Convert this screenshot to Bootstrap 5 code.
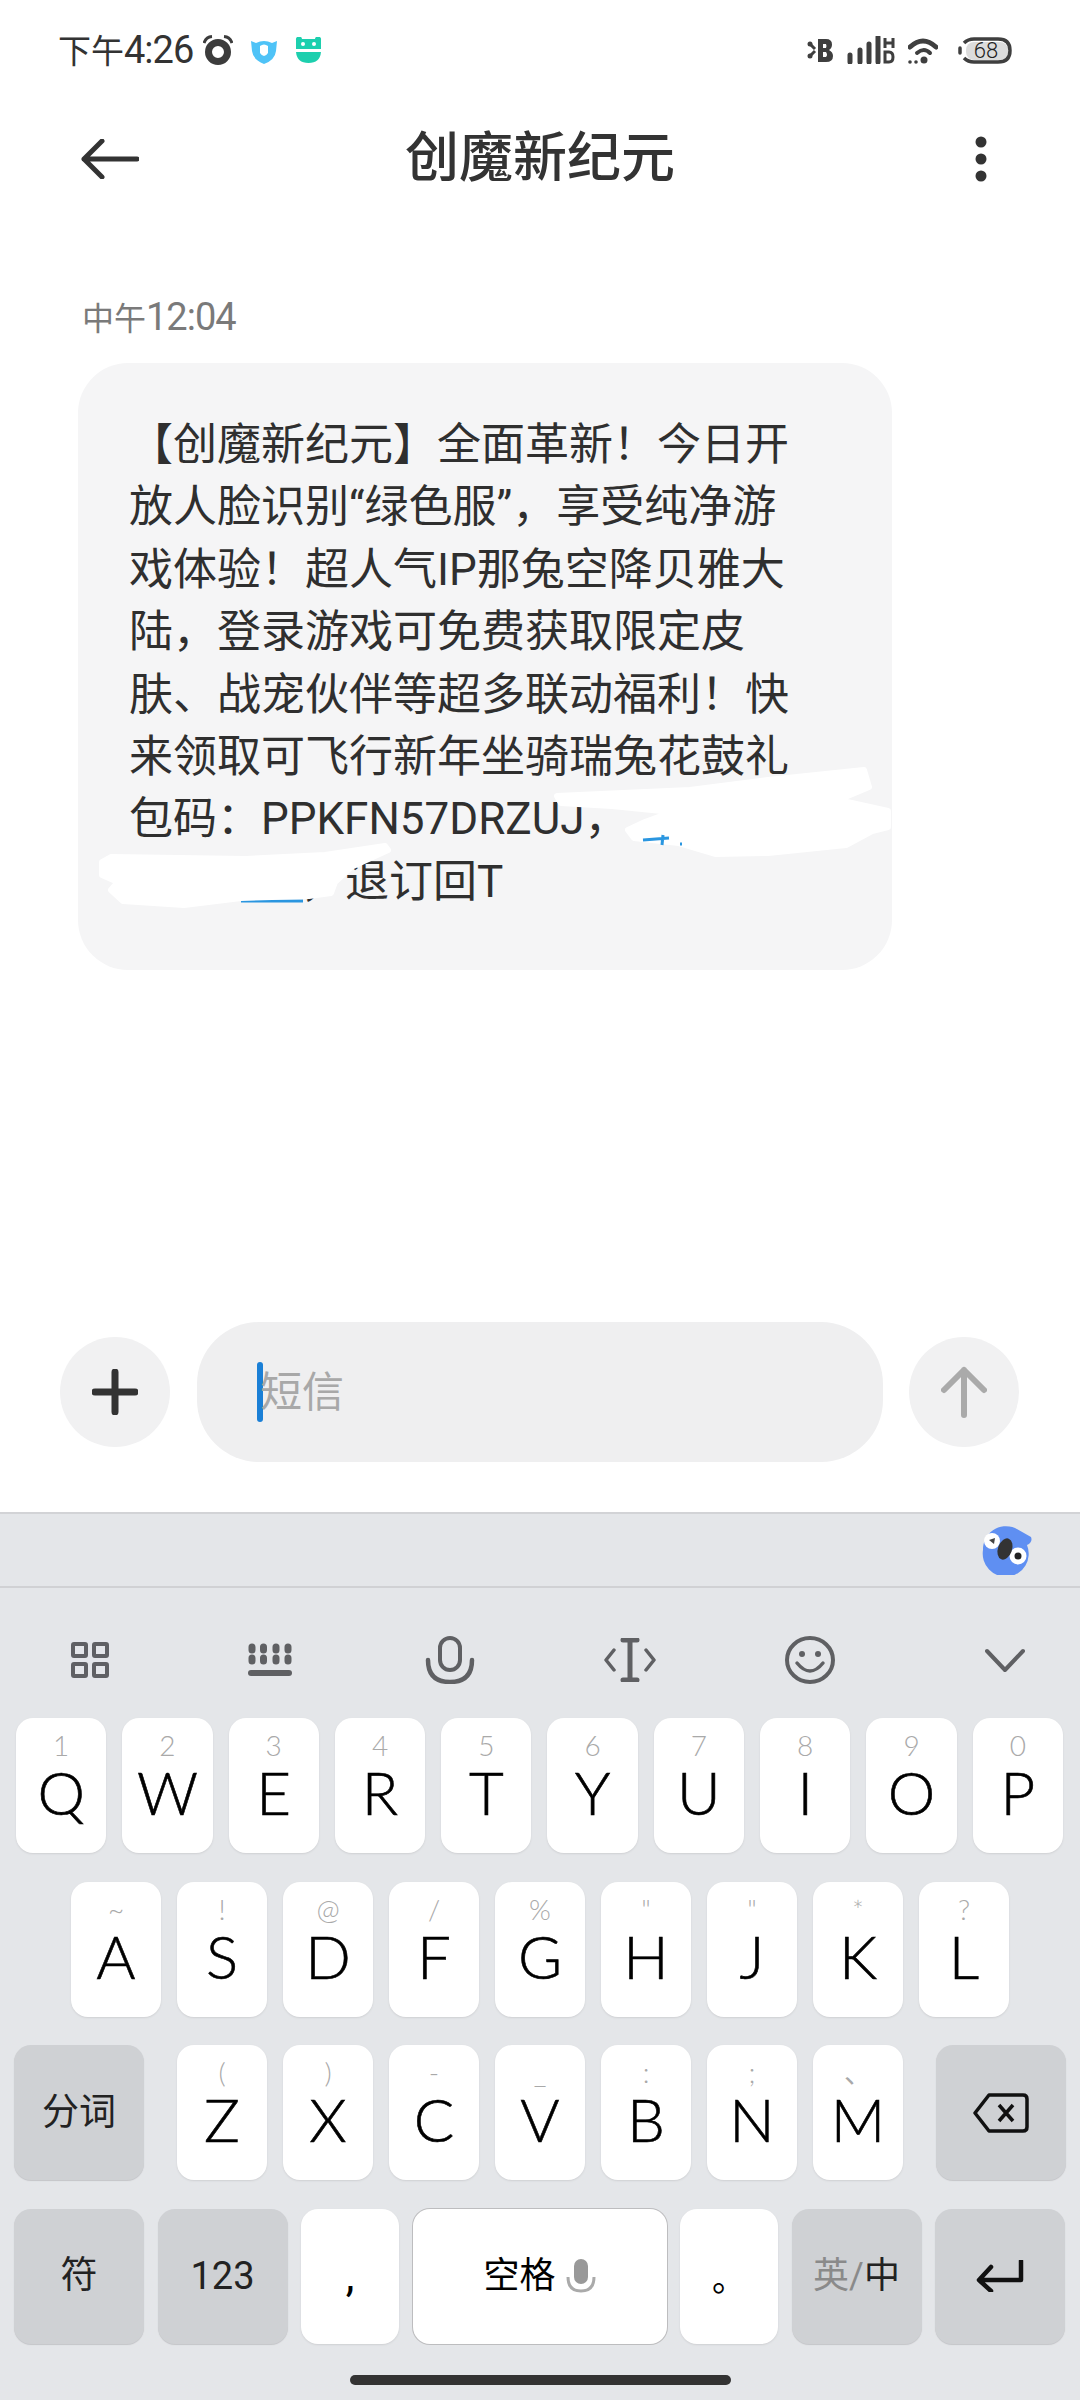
<!DOCTYPE html>
<html lang="zh-CN">
<head>
    <meta charset="UTF-8">
    <meta name="viewport" content="width=device-width, initial-scale=1.0">
    <title>创魔新纪元</title>
    <link rel="stylesheet" href="https://cdn.jsdelivr.net/npm/bootstrap@5.3.0/dist/css/bootstrap.min.css">
    <style>
        body {
            width: 1080px;
            height: 2400px;
            overflow: hidden;
            background: #fff;
            font-family: Roboto, "Noto Sans CJK SC", sans-serif;
            color: #333;
        }
        .phone-page { width: 1080px; height: 2400px; }

        /* status bar */
        .status-bar { height: 100px; padding: 0 68px 0 58px; }
        .status-time { font-size: 33px; line-height: 1; margin-right: 10px; }
        .time-digits { font-size: 38px; letter-spacing: -1px; }
        .status-gap { margin-left: 17px; }

        /* header */
        .top-bar { height: 116px; padding-top: 2px; }
        .top-side { width: 170px; }
        .top-title { font-size: 54px; font-weight: 500; line-height: 1; color: #333; }
        .back-icon { margin-left: 81px; }
        .more-icon { margin-right: 89px; }

        /* message */
        .thread { padding: 76px 0 0 78px; }
        .msg-time { font-size: 32px; line-height: 50px; height: 50px; color: #7a7a7a; margin: 0 0 21px 4px; }
        .msg-bubble {
            width: 814px;
            height: 607px;
            padding: 51px 0 0 51px;
            background: #f5f5f6;
            border-radius: 50px;
            font-size: 44px;
            line-height: 62.4px;
            color: #2f2f2f;
            white-space: nowrap;
        }
        .msg-hidden { display: inline-block; width: 172px; height: 1px; }
        .msg-scribble { position: absolute; left: 0; top: 0; }

        /* compose row */
        .compose { height: 140px; margin-bottom: 50px; padding-left: 60px; }
        .round-btn { width: 110px; height: 110px; background: #f1f1f2; flex: none; }
        .compose-input {
            width: 686px;
            height: 140px;
            margin: 0 26px 0 27px;
            padding-left: 60px;
            background: #efeff0;
            border-radius: 62px;
            font-size: 42px;
            color: #a8a8a8;
        }
        .compose-caret { width: 6px; height: 60px; background: #1a7fd6; border-radius: 3px; margin-right: -3px; }

        /* keyboard */
        .kbd { background: #e4e6e9; border-top: 2px solid #d2d3d6; height: 888px; flex: none; }
        .kbd-suggest { height: 74px; border-bottom: 2px solid #d0d1d4; padding-right: 47px; }
        .kbd-tools { height: 130px; padding-top: 14px; }
        .kbd-tool { width: 180px; flex: none; }
        .kbd-tool-last { width: 150px; flex: none; margin-left: 30px; }
        .kbd-rows { gap: 28.5px; }
        .kbd-row { height: 135px; gap: 16px; }
        .kbd-row-top { padding: 0 17px 0 16px; }
        .kbd-key {
            width: 90px;
            height: 135px;
            flex: 1 1 0;
            background: #fff;
            border-radius: 17px;
            box-shadow: 0 1px 2px #cfd0d3;
            color: #000;
        }
        .kbd-letter { padding-top: 10px; }
        .kbd-row-mid .kbd-key, .kbd-letters .kbd-key { flex: none; }
        .kbd-hint { height: 34px; line-height: 34px; font-family: Lato, sans-serif; font-weight: 300; font-size: 28px; color: #a9a9a9; }
        .kbd-letter-text { height: 60px; line-height: 60px; font-family: Lato, sans-serif; font-weight: 300; font-size: 60px; -webkit-text-stroke: .6px #000; }
        .kbd-row-low { padding: 0 15px 0 14px; }
        .kbd-fn { width: 130px; flex: none; background: #cfd1d4; font-size: 37px; height: 135px; border-radius: 17px; box-shadow: 0 1px 1px #c4c5c8; color: #222; }
        .kbd-letters { gap: 16px; margin: 0 17px; }
        .kbd-bottom { gap: 13.5px; }
        .kbd-plain { width: 98px; flex: none; font-size: 44px; }
        .kbd-dot { font-size: 34px; padding-top: 6px; }
        .kbd-space { width: 254px; flex: none; font-size: 36px; box-shadow: 0 0 0 1px #bdbdbf; gap: 10px; }
        .kbd-num { font-size: 38px; }
        .kbd-lang { font-size: 36px; }
        .kbd-lang-off { color: #8a8a8a; }
        .home-bar { width: 381px; height: 10px; background: #333; border-radius: 5px; margin: 31px auto 0; }
    </style>
</head>
<body>
<div class="phone-page d-flex flex-column">

    <!-- Status bar -->
    <div class="status-bar d-flex align-items-center justify-content-between">
        <div class="d-flex align-items-center">
            <span class="status-time">下午<span class="time-digits">4:26</span></span>
            <svg width="30" height="30" viewBox="0 0 30 30"><circle cx="15" cy="17" r="9.5" fill="none" stroke="#3c3c3c" stroke-width="7"/><path d="M1 8 Q3 2 9 1.5M29 8 Q27 2 21 1.5" fill="none" stroke="#3c3c3c" stroke-width="3"/></svg>
            <svg class="status-gap" width="28" height="28" viewBox="0 0 28 28"><path d="M1 5 L6 7 Q14 3 22 7 L27 5 L26 15 Q25 24 14 28 Q3 24 2 15Z" fill="#4fc3f7"/><path d="M10 10 Q14 7 18 10 L18 17 Q14 23 10 17Z" fill="#fff"/></svg>
            <svg class="status-gap" width="27" height="26" viewBox="0 0 27 26"><path d="M1 3 a3 3 0 0 1 6 -1 h13 a3 3 0 0 1 6 1 v9 H1Z" fill="#1dcfae"/><path d="M1 15 H26 Q25 26 13.500 26 Q2 26 1 15Z" fill="#1dcfae"/><circle cx="8" cy="7" r="2" fill="#fff"/><circle cx="19" cy="7" r="2" fill="#fff"/></svg>
        </div>
        <div class="d-flex align-items-center">
            <svg width="28" height="28" viewBox="0 0 28 28"><path d="M12 3 H20 Q26 3 26 8.500 Q26 12 23 14 Q27 16 27 20 Q27 26 20 26 H12Z M17 8 V12 H20 Q21 10 20 8Z M17 16 V21 H20 Q22 19 20 16Z" fill="#3f3f3f" fill-rule="evenodd"/><circle cx="4" cy="8" r="2.500" fill="#3f3f3f"/><circle cx="4" cy="20" r="2.500" fill="#3f3f3f"/><path d="M4 8 L9 13 M9 15 L4 20" stroke="#3f3f3f" stroke-width="3"/></svg>
            <svg style="margin-left:13px" width="49" height="28" viewBox="0 0 49 28"><path d="M3 19 V26 M13 14 V26 M22 8 V26 M31 1 V26" stroke="#3f3f3f" stroke-width="5" stroke-linecap="round"/><path d="M38 2 V12 M46 2 V12 M38 7 H46 M38 16 V26 H42 Q46 26 46 21 Q46 16 42 16Z" fill="none" stroke="#3f3f3f" stroke-width="3"/></svg>
            <svg style="margin-left:12px" width="30" height="28" viewBox="0 0 30 28"><path d="M2 11 Q15 -1 28 11" fill="none" stroke="#3f3f3f" stroke-width="5" stroke-linecap="round"/><path d="M9 17 Q16 11 22 17" fill="none" stroke="#3f3f3f" stroke-width="4" stroke-linecap="round"/><circle cx="16" cy="24" r="3.500" fill="#3f3f3f"/><circle cx="2" cy="26" r="1.800" fill="#3f3f3f"/><circle cx="8" cy="26" r="1.800" fill="#3f3f3f"/></svg>
            <svg style="margin-left:20px" width="54" height="27" viewBox="0 0 54 27"><rect x="8" y="5" width="42" height="18" rx="8" fill="#dcdcdc"/><path d="M6 6 Q10 2 16 2 H40 Q52 2 52 13.500 Q52 25 40 25 H16 Q10 25 6 21" fill="none" stroke="#3f3f3f" stroke-width="3.500"/><path d="M2 11 V16" stroke="#3f3f3f" stroke-width="3.500" stroke-linecap="round"/><text x="28" y="21" text-anchor="middle" font-family="Roboto, sans-serif" font-size="22" font-weight="300" fill="#222">68</text></svg>
        </div>
    </div>

    <!-- Title bar -->
    <div class="top-bar d-flex align-items-center">
        <div class="top-side d-flex">
            <svg class="back-icon" width="58" height="40" viewBox="0 0 58 40"><path d="M56 20 H3 M21 2 L3 20 L21 38" fill="none" stroke="#333" stroke-width="5" stroke-linecap="round" stroke-linejoin="round"/></svg>
        </div>
        <div class="top-title flex-grow-1 text-center">创魔新纪元</div>
        <div class="top-side d-flex justify-content-end">
            <svg class="more-icon" width="20" height="46" viewBox="0 0 20 46"><circle cx="10" cy="6" r="5.500" fill="#333"/><circle cx="10" cy="23" r="5.500" fill="#333"/><circle cx="10" cy="40" r="5.500" fill="#333"/></svg>
        </div>
    </div>

    <!-- Message -->
    <div class="thread flex-grow-1">
        <div class="msg-time">中午<span class="time-digits">12:04</span></div>
        <div class="msg-bubble position-relative">
            【创魔新纪元】全面革新！今日开<br>
            放人脸识别“绿色服”，享受纯净游<br>
            戏体验！超人气IP那兔空降贝雅大<br>
            陆，登录游戏可免费获取限定皮<br>
            肤、战宠伙伴等超多联动福利！快<br>
            来领取可飞行新年坐骑瑞兔花鼓礼<br>
            包码：PPKFN57DRZUJ，<br>
            <span class="msg-hidden"></span>，退订回T
            <!-- hand-drawn redaction over the link -->
            <svg class="msg-scribble" width="814" height="607" viewBox="0 0 814 607">
                <path d="M163 538 H225" stroke="#2a96e0" stroke-width="3"/>
                <g fill="#fff" stroke="#fff" stroke-width="6" stroke-linejoin="round">
                    <path d="M479 433 L612 427 L690 417 L786 407 L791 424 L760 437 L810 448 L810 464 L794 468 L768 482 L690 490 L638 491 L601 480 L556 475 L550 467 L567 459 L594 449 L534 443 L483 440Z"/>
                    <path d="M24 499 L33 494 L168 496 L247 492 L307 483 L310 487 L273 504 L257 519 L253 530 L231 533 L163 535 L106 542 L45 538 L33 527 L40 519 L24 512Z"/>
                </g>
                <path d="M565 477 L591 475 M585 472 L584 482 M602 481 L604 481" stroke="#2a96e0" stroke-width="3"/>
            </svg>
        </div>
    </div>

    <!-- Compose row -->
    <div class="compose d-flex align-items-center">
        <div class="round-btn rounded-circle d-flex align-items-center justify-content-center">
            <svg width="46" height="46" viewBox="0 0 46 46"><path d="M23 3 V43 M3 23 H43" stroke="#333" stroke-width="7" stroke-linecap="round"/></svg>
        </div>
        <div class="compose-input d-flex align-items-center">
            <span class="compose-caret"></span>短信
        </div>
        <div class="round-btn rounded-circle d-flex align-items-center justify-content-center">
            <svg width="46" height="52" viewBox="0 0 46 52"><path d="M23 49 V4 M3 24 L23 4 L43 24" fill="none" stroke="#aaa" stroke-width="6" stroke-linecap="round" stroke-linejoin="round"/></svg>
        </div>
    </div>

    <!-- Keyboard -->
    <div class="kbd">
        <div class="kbd-suggest d-flex align-items-center justify-content-end">
            <svg width="52" height="50" viewBox="0 0 52 50"><path d="M2 25 A23 23 0 0 1 34 3 L50 12 Q52 17 46 20 A23 23 0 1 1 2 25Z" fill="#5f8ff2"/><circle cx="11" cy="16" r="8" fill="#fff"/><path d="M8 15 L14 13 L13 19Z" fill="#444"/><circle cx="37" cy="31" r="8.500" fill="#fff"/><circle cx="37" cy="31" r="3.500" fill="#222"/><ellipse cx="24" cy="24" rx="7" ry="11" transform="rotate(20 24 24)" fill="#333"/></svg>
        </div>
        <div class="kbd-tools d-flex align-items-center">
            <div class="kbd-tool d-flex justify-content-center">
                <svg width="38" height="36" viewBox="0 0 38 36"><g fill="none" stroke="#5f6063" stroke-width="4" stroke-linejoin="round"><rect x="2" y="2" width="13" height="12" rx="1"/><rect x="23" y="2" width="13" height="12" rx="1"/><rect x="2" y="22" width="13" height="12" rx="1"/><rect x="23" y="22" width="13" height="12" rx="1"/></g></svg>
            </div>
            <div class="kbd-tool d-flex justify-content-center">
                <svg width="44" height="34" viewBox="0 0 44 34"><path d="M4 4 V7 M15.500 4 V7 M28 4 V7 M40 4 V7 M4 15 V18 M15.500 15 V18 M28 15 V18 M40 15 V18" stroke="#5f6063" stroke-width="7" stroke-linecap="round"/><path d="M3 30 H41" stroke="#5f6063" stroke-width="6" stroke-linecap="round"/></svg>
            </div>
            <div class="kbd-tool d-flex justify-content-center">
                <svg width="50" height="48" viewBox="0 0 50 48"><rect x="15" y="2" width="20" height="32" rx="10" fill="none" stroke="#5f6063" stroke-width="4"/><path d="M3 24 Q3 46 25 46 Q47 46 47 24" fill="none" stroke="#5f6063" stroke-width="4.500" stroke-linecap="round"/></svg>
            </div>
            <div class="kbd-tool d-flex justify-content-center">
                <svg width="52" height="44" viewBox="0 0 52 44"><path d="M19 2 H33 M19 42 H33 M26 2 V42" stroke="#5f6063" stroke-width="5" stroke-linecap="round"/><path d="M10 12 L2 22 L10 32 M42 12 L50 22 L42 32" fill="none" stroke="#5f6063" stroke-width="3.500" stroke-linecap="round" stroke-linejoin="round"/></svg>
            </div>
            <div class="kbd-tool d-flex justify-content-center">
                <svg width="50" height="48" viewBox="0 0 50 48"><ellipse cx="25" cy="24" rx="23" ry="22" fill="none" stroke="#5f6063" stroke-width="4"/><circle cx="17" cy="18" r="3" fill="#5f6063"/><circle cx="33" cy="18" r="3" fill="#5f6063"/><path d="M12 27 Q25 43 38 27" fill="none" stroke="#5f6063" stroke-width="3.500" stroke-linecap="round"/></svg>
            </div>
            <div class="kbd-tool-last d-flex justify-content-center">
                <svg width="40" height="24" viewBox="0 0 40 24"><path d="M2 3 L20 22 L38 3" fill="none" stroke="#5f6063" stroke-width="4" stroke-linecap="round" stroke-linejoin="round"/></svg>
            </div>
        </div>

        <div class="kbd-rows d-flex flex-column">
            <div class="kbd-row kbd-row-top d-flex" id="row-top"></div>
            <div class="kbd-row kbd-row-mid d-flex justify-content-center" id="row-mid"></div>
            <div class="kbd-row kbd-row-low d-flex">
                <div class="kbd-fn d-flex align-items-center justify-content-center">分词</div>
                <div class="kbd-letters d-flex" id="row-low"></div>
                <div class="kbd-fn d-flex align-items-center justify-content-center">
                    <svg width="56" height="40" viewBox="0 0 56 40"><path d="M16 2 H50 Q54 2 54 6 V34 Q54 38 50 38 H16 L2 20Z" fill="none" stroke="#111" stroke-width="3.500" stroke-linejoin="round"/><path d="M26 12 L40 28 M40 12 L26 28" stroke="#111" stroke-width="3.500"/></svg>
                </div>
            </div>
            <div class="kbd-row kbd-row-low kbd-bottom d-flex">
                <div class="kbd-fn d-flex align-items-center justify-content-center">符</div>
                <div class="kbd-fn kbd-num d-flex align-items-center justify-content-center">123</div>
                <div class="kbd-key kbd-plain d-flex align-items-center justify-content-center">,</div>
                <div class="kbd-key kbd-space d-flex align-items-center justify-content-center">
                    空格
                    <svg width="30" height="34" viewBox="0 0 30 34"><rect x="8" y="0" width="14" height="25" rx="7" fill="#999"/><path d="M2 18 Q2 32 15 32 Q28 32 28 18" fill="none" stroke="#aaa" stroke-width="3"/></svg>
                </div>
                <div class="kbd-key kbd-plain kbd-dot d-flex align-items-center justify-content-center">。</div>
                <div class="kbd-fn kbd-lang d-flex align-items-center justify-content-center"><span class="kbd-lang-off">英/</span>中</div>
                <div class="kbd-fn d-flex align-items-center justify-content-center">
                    <svg width="48" height="32" viewBox="0 0 48 32"><path d="M45 1 V20 H4 M15 7 L3 20 L15 31" fill="none" stroke="#111" stroke-width="4.500" stroke-linecap="round" stroke-linejoin="round"/></svg>
                </div>
            </div>
        </div>
        <div class="home-bar"></div>
    </div>
</div>

<script>
    const rows = {
        "row-top": [["Q","1"],["W","2"],["E","3"],["R","4"],["T","5"],["Y","6"],["U","7"],["I","8"],["O","9"],["P","0"]],
        "row-mid": [["A","~"],["S","!"],["D","@"],["F","/"],["G","%"],["H","\""],["J","\""],["K","*"],["L","?"]],
        "row-low": [["Z","("],["X",")"],["C","-"],["V","_"],["B",":"],["N",";"],["M","、"]]
    };

    Object.keys(rows).forEach(id => {
        const row = document.getElementById(id);
        rows[id].forEach(([letter, hint]) => {
            row.innerHTML += `
                <div class="kbd-key kbd-letter d-flex flex-column align-items-center">
                    <span class="kbd-hint">${hint}</span>
                    <span class="kbd-letter-text">${letter}</span>
                </div>`;
        });
    });
</script>
<script src="https://cdn.jsdelivr.net/npm/bootstrap@5.3.0/dist/js/bootstrap.bundle.min.js"></script>
</body>
</html>
